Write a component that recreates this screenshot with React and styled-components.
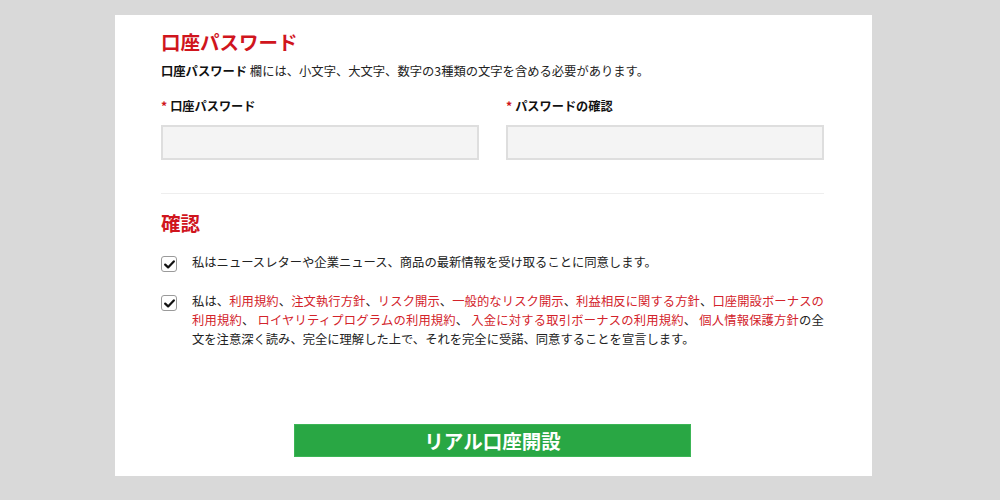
import styled, { createGlobalStyle } from "styled-components";

const GlobalStyle = createGlobalStyle`
  html, body {
    margin: 0;
    padding: 0;
    background: #d9d9d9;
  }
  body {
    font-family: "Noto Sans CJK JP", "Noto Sans", sans-serif;
    color: #222222;
    text-spacing-trim: space-all;
  }
`;

const Page = styled.div`
  padding-top: 15px;
  padding-left: 115px;
  min-height: 500px;
  box-sizing: border-box;
`;

const Card = styled.div`
  width: 757px;
  box-sizing: border-box;
  background: #ffffff;
  padding: 15px 48px 19px 46px;
  display: flex;
  flex-direction: column;
`;

const Heading = styled.h2`
  margin: ${(p) => p.$top || 0}px 0 0;
  font-size: 19.5px;
  line-height: 24px;
  font-weight: bold;
  color: #d0151d;
`;

const Note = styled.p`
  margin: 8px 0 0;
  font-size: 12.3px;
  line-height: 18px;

  b {
    color: #111111;
  }
`;

const Fields = styled.div`
  margin-top: 17px;
  display: grid;
  grid-template-columns: 1fr 1fr;
  column-gap: 27px;
`;

const Field = styled.div`
  display: flex;
  flex-direction: column;
  gap: 10px;
`;

const Label = styled.label`
  font-size: 12.2px;
  line-height: 18px;
  font-weight: bold;
  color: #111111;
`;

const Star = styled.span`
  color: #d0151d;
  margin-right: 3px;
`;

const Input = styled.input`
  height: 35px;
  box-sizing: border-box;
  width: 100%;
  border: 2px solid #dedede;
  background: #f4f4f4;
  outline: none;
`;

const Divider = styled.hr`
  margin: 33px 0 0;
  border: none;
  height: 1px;
  background: #eeeeee;
`;

const Checks = styled.div`
  margin-top: 18px;
  display: flex;
  flex-direction: column;
  gap: 20px;
`;

const CheckRow = styled.div`
  display: flex;
  align-items: flex-start;
  gap: 15px;
`;

const Box = styled.span`
  flex: none;
  width: 16px;
  height: 16px;
  margin-top: 3px;
  box-sizing: border-box;
  border: 1px solid #9a9a9a;
  border-radius: 3px;
  background: #ffffff;
  display: flex;
  align-items: center;
  justify-content: center;
`;

const CheckText = styled.p`
  margin: 0;
  flex: 1;
  font-size: 12.3px;
  line-height: 19px;
  text-align: justify;
  color: #222222;
`;

const Terms = styled.a`
  color: #d3232b;
  text-decoration: none;
`;

const Submit = styled.button`
  margin: 75px auto 0;
  width: 60%;
  height: 33px;
  border: 1px solid #3cb556;
  background: #29a744;
  color: #ffffff;
  font-family: inherit;
  font-size: 19.5px;
  font-weight: bold;
  line-height: 1;
  cursor: pointer;
`;

const Tick = () => (
  <svg width="11" height="9" viewBox="0 0 11 9">
    <path d="M1.2 4.6 L4.1 7.4 L9.8 1.4" fill="none" stroke="#111" strokeWidth="2.2" strokeLinecap="round" strokeLinejoin="round" />
  </svg>
);

const links = [
  "利用規約",
  "注文執行方針",
  "リスク開示",
  "一般的なリスク開示",
  "利益相反に関する方針",
];

export default function App() {
  return (
    <>
      <GlobalStyle />
      <Page>
        <Card>
          <Heading>口座パスワード</Heading>
          <Note>
            <b>口座パスワード</b> 欄には、小文字、大文字、数字の3種類の文字を含める必要があります。
          </Note>
          <Fields>
            <Field>
              <Label>
                <Star>*</Star>口座パスワード
              </Label>
              <Input type="password" />
            </Field>
            <Field>
              <Label>
                <Star>*</Star>パスワードの確認
              </Label>
              <Input type="password" />
            </Field>
          </Fields>
          <Divider />
          <Heading $top={17}>確認</Heading>
          <Checks>
            <CheckRow>
              <Box>
                <Tick />
              </Box>
              <CheckText>
                私はニュースレターや企業ニュース、商品の最新情報を受け取ることに同意します。
              </CheckText>
            </CheckRow>
            <CheckRow>
              <Box>
                <Tick />
              </Box>
              <CheckText>
                私は、
                {links.map((l) => (
                  <span key={l}>
                    <Terms>{l}</Terms>、
                  </span>
                ))}
                <Terms>口座開設ボーナスの</Terms>
                <Terms>利用規約</Terms>、{" "}
                <Terms>ロイヤリティプログラムの利用規約</Terms>、{" "}
                <Terms>入金に対する取引ボーナスの利用規約</Terms>、{" "}
                <Terms>個人情報保護方針</Terms>の全
                <span>文を注意深く読み、完全に理解した上で、それを完全に受諾、同意することを宣言します。</span>
              </CheckText>
            </CheckRow>
          </Checks>
          <Submit>リアル口座開設</Submit>
        </Card>
      </Page>
    </>
  );
}
